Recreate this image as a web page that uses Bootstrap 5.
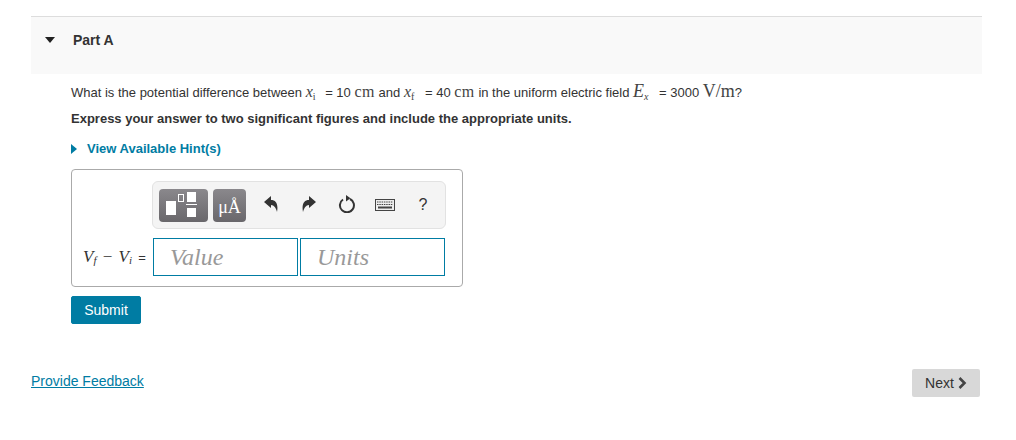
<!DOCTYPE html>
<html lang="en">
<head>
  <meta charset="UTF-8">
  <meta name="viewport" content="width=device-width, initial-scale=1.0">
  <title>Part A</title>
  <link rel="stylesheet" href="https://cdn.jsdelivr.net/npm/bootstrap@5.3.0/dist/css/bootstrap.min.css">
  <style>
    body {
      font-family: "Liberation Sans", Arial, sans-serif;
      font-size: 13px;
      color: #333;
      background: #fff;
    }
    .page-wrap {
      width: 951px;
      margin-left: 31px;
      padding-top: 16px;
    }
    .part-head {
      height: 58px;
      border-top: 1px solid #ddd;
      background: #f9f9f9;
      padding: 15px 0 0 14px;
      font-weight: 700;
      font-size: 14px;
      line-height: 16px;
    }
    .caret-down {
      width: 0;
      height: 0;
      border-left: 5.5px solid transparent;
      border-right: 5.5px solid transparent;
      border-top: 6px solid #222;
      margin: 5px 18px 0 0;
    }
    .part-body {
      padding: 10px 0 0 40px;
    }
    .q-line {
      line-height: 18px;
      margin-bottom: 8px;
      height: 18px;
      white-space: nowrap;
    }
    .mth, .mth-lg {
      font-family: "Liberation Serif", serif;
      line-height: 0;
      color: #444;
    }
    .mth { font-size: 16px; }
    .mth-lg { font-size: 18px; }
    .mth i, .mth-lg i { font-style: italic; }
    .mth sub, .mth-lg sub { font-size: 10px; bottom: -.25em; }
    .unit-cm { letter-spacing: .5px; }
    .gap-x { margin-right: 6px; }
    .gap-e { margin-right: 7px; }
    .hint-link {
      color: #007ca3;
      font-weight: 700;
      text-decoration: none;
      line-height: 16px;
      margin-top: 13px;
    }
    .caret-right {
      width: 0;
      height: 0;
      border-top: 5.5px solid transparent;
      border-bottom: 5.5px solid transparent;
      border-left: 6px solid #007ca3;
      margin-right: 10px;
    }
    .answer-box {
      width: 392px;
      height: 118px;
      margin-top: 12px;
      border: 1px solid #aaa;
      border-radius: 4px;
      padding: 11px 17px 0 11px;
    }
    .tool-bar {
      width: 294px;
      height: 48px;
      margin-left: 69px;
      background: #f4f4f4;
      border: 1px solid #e2e2e2;
      border-radius: 6px;
      padding: 6px 0 0 6px;
    }
    .tool-btn {
      height: 33px;
      margin-top: 1px;
      border-radius: 4px;
      background: linear-gradient(#8a888c, #69676b);
      color: #fff;
    }
    .btn-frac { width: 49px; }
    .btn-units {
      width: 33px;
      margin-left: 5px;
      font-family: "Liberation Serif", serif;
      font-size: 18px;
      line-height: 37px;
      text-align: center;
    }
    .tool-plain {
      width: 38px;
      height: 31px;
    }
    .tool-first { width: 39px; margin-left: 5px; }
    .tool-keys { padding-top: 3px; }
    .tool-help { font-size: 16px; padding-top: 2px; }
    .ans-row {
      margin-top: 9px;
    }
    .ans-label {
      width: 70px;
      font-family: "Liberation Serif", serif;
      font-size: 17px;
      white-space: nowrap;
    }
    .ans-label sub { font-size: 11px; bottom: -.2em; }
    .ans-minus { margin: 0 2px; }
    .ans-eq { font-family: "Liberation Sans", sans-serif; font-size: 13px; margin-left: 2px; }
    .ans-input {
      width: 145px;
      height: 38px;
      border: 1px solid #007ca3;
      padding: 0 0 0 16px;
      font-family: "Liberation Serif", serif;
      font-style: italic;
      font-size: 24px;
      line-height: 36px;
      color: #999;
    }
    .ans-input + .ans-input { margin-left: 2px; }
    .btn-submit {
      width: 70px;
      height: 28px;
      margin-top: 9px;
      padding: 0;
      background: #007ca3;
      border: 1px solid #007ca3;
      border-radius: 2px;
      color: #fff;
      font-size: 14px;
    }
    .foot-row {
      margin-top: 45px;
      padding-right: 2px;
    }
    .feedback {
      color: #007ca3;
      font-size: 14px;
      margin-bottom: 4px;
    }
    .btn-next {
      width: 68px;
      height: 28px;
      padding: 0;
      background: #d8d8d8;
      border: 0;
      border-radius: 2px;
      color: #333;
      font-size: 14px;
    }
  </style>
</head>
<body class="m-0">
  <div class="page-wrap">
    <div class="part-head d-flex align-items-start">
      <div class="caret-down"></div>
      <div>Part A</div>
    </div>

    <div class="part-body">
      <div class="q-line">What is the potential difference between <span class="mth gap-x"><i>x</i><sub>i</sub></span> = 10 <span class="mth unit-cm">cm</span> and <span class="mth gap-e"><i>x</i><sub>f</sub></span> = 40 <span class="mth unit-cm">cm</span> in the uniform electric field <span class="mth-lg gap-e"><i>E</i><sub><i>x</i></sub></span> = 3000 <span class="mth-lg">V/m</span>?</div>
      <div class="q-line fw-bold">Express your answer to two significant figures and include the appropriate units.</div>
      <div class="hint-link d-flex align-items-center"><div class="caret-right"></div>View Available Hint(s)</div>

      <div class="answer-box">
        <div class="tool-bar d-flex align-items-start">
          <div class="tool-btn btn-frac">
            <svg class="d-block" width="49" height="33" viewBox="0 0 49 33">
              <rect x="7" y="12" width="10" height="14" fill="#fff"/>
              <rect x="19.5" y="5.5" width="5" height="7" fill="none" stroke="#fff"/>
              <rect x="28" y="3" width="9" height="10" fill="#fff"/>
              <rect x="27" y="15" width="11" height="1" fill="#fff"/>
              <rect x="28" y="19" width="9" height="9" fill="#fff"/>
            </svg>
          </div>
          <div class="tool-btn btn-units">μÅ</div>
          <div class="tool-plain tool-first d-flex align-items-center justify-content-center">
            <svg width="14" height="16" viewBox="0 0 14 16"><path d="M0 6 7 0V4C12 4 14.5 8 13 16 12 12 10 9 7 9V12Z" fill="#333"/></svg>
          </div>
          <div class="tool-plain d-flex align-items-center justify-content-center">
            <svg width="14" height="16" viewBox="0 0 14 16"><path d="M14 6 7 0V4C2 4-.5 8 1 16 2 12 4 9 7 9V12Z" fill="#333"/></svg>
          </div>
          <div class="tool-plain d-flex align-items-center justify-content-center">
            <svg width="18" height="18" viewBox="0 0 18 18"><path d="M5 4.500A7 7 0 1 0 12 4" fill="none" stroke="#333" stroke-width="2"/><path d="M8 0V6.500L12.500 3.200Z" fill="#333"/></svg>
          </div>
          <div class="tool-plain tool-keys d-flex align-items-center justify-content-center">
            <svg width="20" height="12" viewBox="0 0 20 12"><rect x=".5" y=".5" width="19" height="11" fill="#eee" stroke="#444"/><path d="M2 3H18M2 5.500H18" stroke="#444" stroke-dasharray="1.500 .8"/><path d="M3 8.500H17" stroke="#444" stroke-width="2"/></svg>
          </div>
          <div class="tool-plain tool-help d-flex align-items-center justify-content-center">?</div>
        </div>
        <div class="ans-row d-flex align-items-center">
          <div class="ans-label"><i>V<sub>f</sub></i> <span class="ans-minus">−</span> <i>V<sub>i</sub></i> <span class="ans-eq">=</span></div>
          <div class="ans-input">Value</div>
          <div class="ans-input">Units</div>
        </div>
      </div>

      <button type="button" class="btn btn-submit d-block">Submit</button>
    </div>

    <div class="foot-row d-flex justify-content-between align-items-center">
      <a href="#" class="feedback">Provide Feedback</a>
      <button type="button" class="btn btn-next d-flex align-items-center justify-content-center">Next
        <svg class="ms-1" width="9" height="12" viewBox="0 0 9 12"><path d="M1.500 1 6.500 6 1.500 11" fill="none" stroke="#444" stroke-width="2.600"/></svg>
      </button>
    </div>
  </div>
</body>
</html>
